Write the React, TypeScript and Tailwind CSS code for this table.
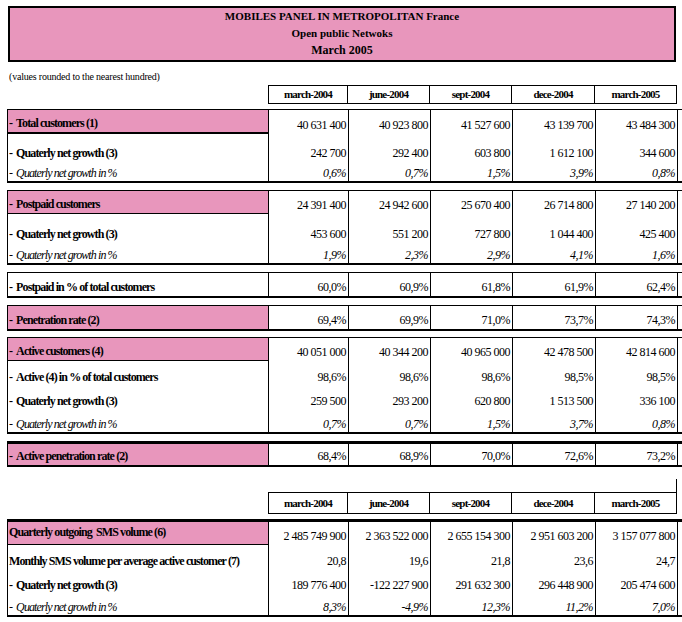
const periods = ['march-2004', 'june-2004', 'sept-2004', 'dece-2004', 'march-2005']

type Row = {
  label: string
  values: string[]
  kind: 'pink' | 'bold' | 'italic'
  h: string
  dash?: boolean
  thick?: boolean
}

const group1: Row[] = [
  { label: 'Total customers (1)', kind: 'pink', h: 'h-[24px]', dash: true, thick: true, values: ['40 631 400', '40 923 800', '41 527 600', '43 139 700', '43 484 300'] },
  { label: 'Quaterly net growth (3)', kind: 'bold', h: 'h-[28px]', dash: true, values: ['242 700', '292 400', '603 800', '1 612 100', '344 600'] },
  { label: 'Quaterly net growth in %', kind: 'italic', h: 'h-[19px]', dash: true, values: ['0,6%', '0,7%', '1,5%', '3,9%', '0,8%'] },
]

const group2: Row[] = [
  { label: 'Postpaid customers', kind: 'pink', h: 'h-[23px]', dash: true, values: ['24 391 400', '24 942 600', '25 670 400', '26 714 800', '27 140 200'] },
  { label: 'Quaterly net growth (3)', kind: 'bold', h: 'h-[29px]', dash: true, values: ['453 600', '551 200', '727 800', '1 044 400', '425 400'] },
  { label: 'Quaterly net growth in %', kind: 'italic', h: 'h-[20px]', dash: true, values: ['1,9%', '2,3%', '2,9%', '4,1%', '1,6%'] },
]

const group3: Row[] = [
  { label: 'Postpaid in % of total customers', kind: 'bold', h: 'h-[23px]', dash: true, values: ['60,0%', '60,9%', '61,8%', '61,9%', '62,4%'] },
]

const group4: Row[] = [
  { label: 'Penetration rate (2)', kind: 'pink', h: 'h-[23px]', dash: true, values: ['69,4%', '69,9%', '71,0%', '73,7%', '74,3%'] },
]

const group5: Row[] = [
  { label: 'Active customers (4)', kind: 'pink', h: 'h-[23px]', dash: true, values: ['40 051 000', '40 344 200', '40 965 000', '42 478 500', '42 814 600'] },
  { label: 'Active (4) in % of total customers', kind: 'bold', h: 'h-[25px]', dash: true, values: ['98,6%', '98,6%', '98,6%', '98,5%', '98,5%'] },
  { label: 'Quaterly net growth (3)', kind: 'bold', h: 'h-[24px]', dash: true, values: ['259 500', '293 200', '620 800', '1 513 500', '336 100'] },
  { label: 'Quaterly net growth in %', kind: 'italic', h: 'h-[22px]', dash: true, values: ['0,7%', '0,7%', '1,5%', '3,7%', '0,8%'] },
]

const group6: Row[] = [
  { label: 'Active penetration rate (2)', kind: 'pink', h: 'h-[21px]', dash: true, values: ['68,4%', '68,9%', '70,0%', '72,6%', '73,2%'] },
]

const smsGroup: Row[] = [
  { label: 'Quarterly outgoing  SMS volume (6)', kind: 'pink', h: 'h-[23px]', values: ['2 485 749 900', '2 363 522 000', '2 655 154 300', '2 951 603 200', '3 157 077 800'] },
  { label: 'Monthly SMS volume per average active customer (7)', kind: 'bold', h: 'h-[25px]', values: ['20,8', '19,6', '21,8', '23,6', '24,7'] },
  { label: 'Quaterly net growth (3)', kind: 'bold', h: 'h-[24px]', dash: true, values: ['189 776 400', '-122 227 900', '291 632 300', '296 448 900', '205 474 600'] },
  { label: 'Quaterly net growth in %', kind: 'italic', h: 'h-[21px]', dash: true, values: ['8,3%', '-4,9%', '12,3%', '11,2%', '7,0%'] },
]

const cols = 'grid grid-cols-[261px_80px_82px_82px_83px_82px]'

export default function App() {
  return (
    <div className="h-[622px] w-[682px] bg-white pt-[6px] font-['Liberation_Serif',serif] text-black">
      <div className="ml-[8px] flex h-[56px] w-[668px] flex-col items-center border-2 border-black bg-[#e896bc] text-[11px] font-bold leading-[17px]">
        <div>MOBILES PANEL IN METROPOLITAN France</div>
        <div>Open public Netwoks</div>
        <div className="text-[12px]">March 2005</div>
      </div>

      <div className="ml-[9px] mt-[9px] text-[10px] leading-[12px] tracking-[-0.2px]">
        (values rounded to the nearest hundred)
      </div>

      <div className="ml-[7px] mt-[2px]">
        <Header h="h-[19px]" />
        <Group rows={group1} className="mt-[5px] border-t" />
        <Group rows={group2} className="mt-[7px] border-t" />
        <Group rows={group3} className="mt-[7px] border-t" />
        <Group rows={group4} className="mt-[7px] border-t" />
        <Group rows={group5} className="mt-[6px] border-t" />
        <Group rows={group6} className="mt-[7px] border-t-[3px]" />
        <div className={`${cols} h-[25px]`}>
          <div className="col-span-5" />
          <div className="mt-[12px] border-r border-black" />
        </div>
        <Header h="h-[22px]" />
        <Group rows={smsGroup} className="mt-[5px] border-t-[3px]" />
      </div>
    </div>
  )
}

function Header({ h }: { h: string }) {
  return (
    <div className={`${cols} ${h}`}>
      <div />
      {periods.map((p, i) => (
        <div
          key={p}
          className={`flex items-center justify-center border-y border-r border-black text-[11px] font-bold tracking-[-0.8px] ${i === 0 ? 'border-l' : ''}`}
        >
          {p}
        </div>
      ))}
    </div>
  )
}

function Group({ rows, className }: { rows: Row[]; className: string }) {
  return (
    <div className={`border-b-2 border-l border-black ${className}`}>
      {rows.map((row, r) => {
        const pink = row.kind === 'pink'
        const italic = row.kind === 'italic'
        const labelBorder = pink && rows.length > 1 ? (row.thick ? 'border-b-2' : 'border-b') : ''
        let align = 'items-end pb-[3px]'
        if (italic) align = 'items-end pb-[2px]'
        if (pink && !row.dash) align = 'items-center pb-[2px]'
        return (
          <div key={r} className={`${cols} ${row.h}`}>
            <div
              className={`flex border-r border-black pl-[1px] text-[12px] leading-[12px] ${labelBorder} ${align} ${
                pink ? 'bg-[#e896bc]' : ''
              } ${italic ? 'font-normal italic tracking-[-0.9px]' : 'font-bold tracking-[-0.9px]'}`}
            >
              {row.dash && <span className="mr-[4px]">-</span>}
              <span className="whitespace-pre">{row.label}</span>
            </div>
            {row.values.map((v, i) => (
              <div
                key={i}
                className={`flex items-end justify-end border-r border-black pr-[2px] text-[12px] leading-[12px] tracking-[-0.5px] ${
                  italic ? 'pb-[2px] italic' : 'pb-[3px]'
                }`}
              >
                {v}
              </div>
            ))}
          </div>
        )
      })}
    </div>
  )
}
